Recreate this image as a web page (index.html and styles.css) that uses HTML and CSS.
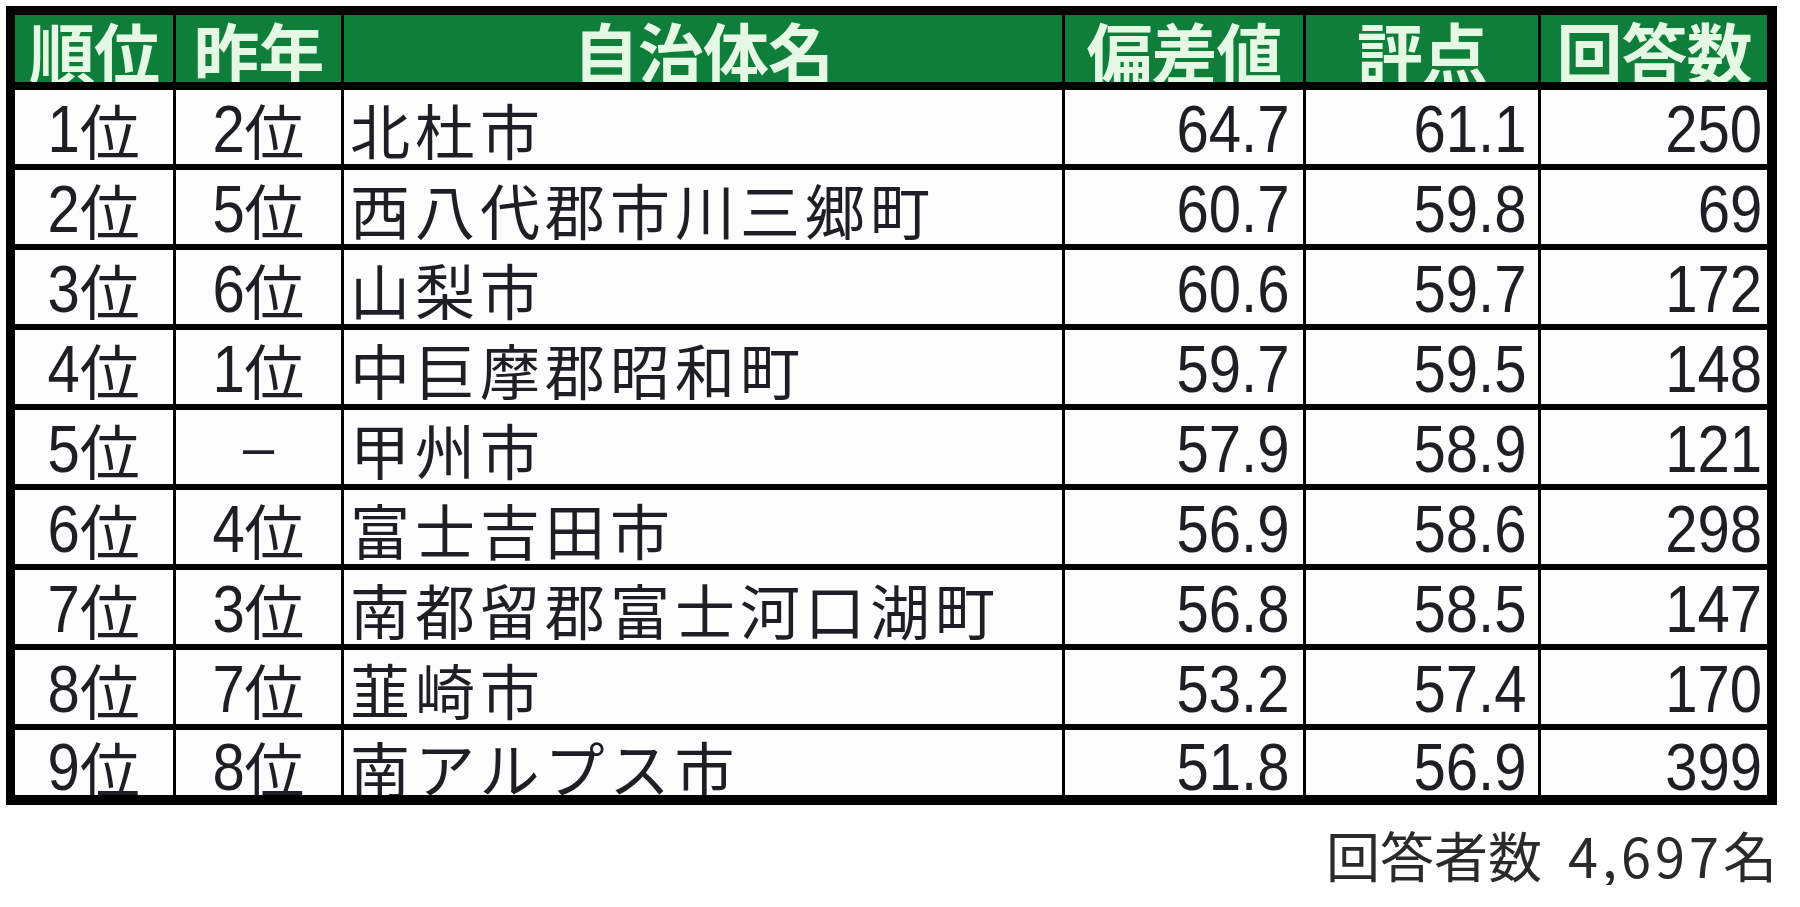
FILE: index.html
```html
<!DOCTYPE html>
<html lang="ja">
<head>
<meta charset="utf-8">
<title>山梨県 自治体ランキング</title>
<link rel="stylesheet" href="styles.css">
</head>
<body>
<div class="sheet">
  <div class="ranking">
    <div class="row head">
      <div class="cell">順位</div>
      <div class="cell">昨年</div>
      <div class="cell">自治体名</div>
      <div class="cell">偏差値</div>
      <div class="cell">評点</div>
      <div class="cell">回答数</div>
    </div>
    <div class="row">
      <div class="cell rank"><span class="num">1</span>位</div>
      <div class="cell rank"><span class="num">2</span>位</div>
      <div class="cell name">北杜市</div>
      <div class="cell value"><span class="num">64.7</span></div>
      <div class="cell value"><span class="num">61.1</span></div>
      <div class="cell value"><span class="num">250</span></div>
    </div>
    <div class="row">
      <div class="cell rank"><span class="num">2</span>位</div>
      <div class="cell rank"><span class="num">5</span>位</div>
      <div class="cell name">西八代郡市川三郷町</div>
      <div class="cell value"><span class="num">60.7</span></div>
      <div class="cell value"><span class="num">59.8</span></div>
      <div class="cell value"><span class="num">69</span></div>
    </div>
    <div class="row">
      <div class="cell rank"><span class="num">3</span>位</div>
      <div class="cell rank"><span class="num">6</span>位</div>
      <div class="cell name">山梨市</div>
      <div class="cell value"><span class="num">60.6</span></div>
      <div class="cell value"><span class="num">59.7</span></div>
      <div class="cell value"><span class="num">172</span></div>
    </div>
    <div class="row">
      <div class="cell rank"><span class="num">4</span>位</div>
      <div class="cell rank"><span class="num">1</span>位</div>
      <div class="cell name">中巨摩郡昭和町</div>
      <div class="cell value"><span class="num">59.7</span></div>
      <div class="cell value"><span class="num">59.5</span></div>
      <div class="cell value"><span class="num">148</span></div>
    </div>
    <div class="row">
      <div class="cell rank"><span class="num">5</span>位</div>
      <div class="cell rank"><span class="dash">–</span></div>
      <div class="cell name">甲州市</div>
      <div class="cell value"><span class="num">57.9</span></div>
      <div class="cell value"><span class="num">58.9</span></div>
      <div class="cell value"><span class="num">121</span></div>
    </div>
    <div class="row">
      <div class="cell rank"><span class="num">6</span>位</div>
      <div class="cell rank"><span class="num">4</span>位</div>
      <div class="cell name">富士吉田市</div>
      <div class="cell value"><span class="num">56.9</span></div>
      <div class="cell value"><span class="num">58.6</span></div>
      <div class="cell value"><span class="num">298</span></div>
    </div>
    <div class="row">
      <div class="cell rank"><span class="num">7</span>位</div>
      <div class="cell rank"><span class="num">3</span>位</div>
      <div class="cell name">南都留郡富士河口湖町</div>
      <div class="cell value"><span class="num">56.8</span></div>
      <div class="cell value"><span class="num">58.5</span></div>
      <div class="cell value"><span class="num">147</span></div>
    </div>
    <div class="row">
      <div class="cell rank"><span class="num">8</span>位</div>
      <div class="cell rank"><span class="num">7</span>位</div>
      <div class="cell name">韮崎市</div>
      <div class="cell value"><span class="num">53.2</span></div>
      <div class="cell value"><span class="num">57.4</span></div>
      <div class="cell value"><span class="num">170</span></div>
    </div>
    <div class="row last">
      <div class="cell rank"><span class="num">9</span>位</div>
      <div class="cell rank"><span class="num">8</span>位</div>
      <div class="cell name">南アルプス市</div>
      <div class="cell value"><span class="num">51.8</span></div>
      <div class="cell value"><span class="num">56.9</span></div>
      <div class="cell value"><span class="num">399</span></div>
    </div>
  </div>
  <p class="total">回答者数<span class="total-num">4,697</span>名</p>
</div>
</body>
</html>
```

FILE: styles.css
```css
* {
  box-sizing: border-box;
}

body {
  margin: 0;
  background: #ffffff;
  font-family: "Noto Sans CJK JP", sans-serif;
  color: #1e1e24;
}

.sheet {
  width: 1777px;
  padding: 6px 0 0 6px;
}

.ranking {
  display: flex;
  flex-direction: column;
  gap: 6px;
  background: #000000;
  padding: 9px 10px 10px 9px;
}

.row {
  display: grid;
  grid-template-columns: 158px 165px 718px 238px 232px 226px;
  column-gap: 3px;
}

.cell {
  background: #fdfdfd;
  height: 74px;
  display: flex;
  align-items: flex-end;
  overflow: hidden;
  font-size: 60px;
  line-height: 58px;
  padding-bottom: 6px;
  white-space: nowrap;
}

.head {
  margin-bottom: 2px;
}

.head .cell {
  background: #0f7e3a;
  color: #e4f8e4;
  height: 67px;
  font-size: 66px;
  line-height: 64px;
  font-weight: 700;
  letter-spacing: -1px;
  justify-content: center;
  padding-bottom: 0;
}

.last .cell {
  height: 65px;
  padding-bottom: 0;
  line-height: 56px;
}

.rank {
  justify-content: center;
}

.name {
  padding-left: 6px;
  letter-spacing: 5px;
}

.value {
  justify-content: flex-end;
}

.row .value:nth-child(4) {
  padding-right: 14px;
}

.row .value:nth-child(5) {
  padding-right: 12px;
}

.row .value:nth-child(6) {
  padding-right: 5px;
}

.num {
  display: inline-block;
  font-family: "Liberation Sans", sans-serif;
  font-size: 66px;
  letter-spacing: 0;
  transform: scaleX(0.88);
  transform-origin: 100% 50%;
}

.rank .num {
  margin-left: -5px;
}

.dash {
  font-family: "Liberation Sans", sans-serif;
  font-size: 56px;
  padding-bottom: 2px;
}

.total {
  margin: 20px 0 0;
  text-align: right;
  font-size: 54px;
  line-height: 60px;
  color: #2a2a2a;
}

.total-num {
  padding-left: 26px;
  letter-spacing: 4px;
}
```
